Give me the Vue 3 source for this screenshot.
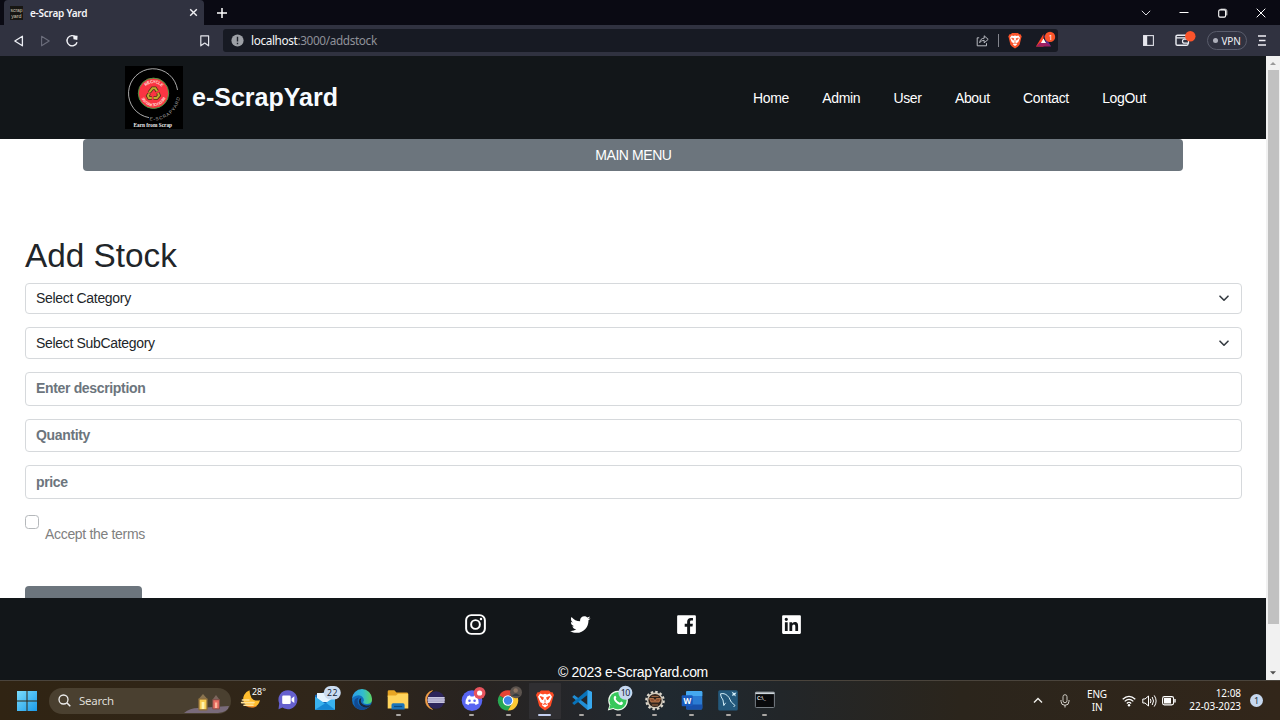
<script setup>
const links = ['Home', 'Admin', 'User', 'About', 'Contact', 'LogOut']
const apps = ['weather', 'chat', 'mail', 'edge', 'folder', 'eclipse', 'discord', 'chrome', 'brave', 'code', 'whatsapp', 'gear', 'word', 'mysql', 'terminal']
const running = ['folder', 'discord', 'chrome', 'brave', 'code', 'whatsapp', 'gear', 'word', 'mysql', 'terminal']
</script>

<template>
  <div class="screen">
    <div class="tabstrip">
      <div class="tab">
        <svg class="favicon" width="13" height="14" viewBox="0 0 13 14">
          <rect width="13" height="14" fill="#171613" />
          <text x="0.5" y="6" font-size="5.8" textLength="12" lengthAdjust="spacingAndGlyphs" fill="#d0c8b6">scrap</text>
          <text x="1.2" y="12" font-size="5.8" textLength="10.4" lengthAdjust="spacingAndGlyphs" fill="#d0c8b6">yard</text>
        </svg>
        <span class="tab-title">e-Scrap Yard</span>
        <svg class="tab-close" width="9" height="9" viewBox="0 0 9 9"><path d="M1.2 1.2 7.8 7.8M7.8 1.2 1.2 7.8" stroke="#f1f1f4" stroke-width="1.4" /></svg>
      </div>
      <svg class="plus" width="10" height="10" viewBox="0 0 10 10"><path d="M5 0V10M0 5H10" stroke="#fff" stroke-width="1.5" /></svg>
      <div class="win-btns">
        <svg width="10" height="10" viewBox="0 0 10 10"><path d="M.8 2.8 5 7 9.2 2.8" fill="none" stroke="#d8d8dc" /></svg>
        <svg width="10" height="10" viewBox="0 0 10 10"><path d="M.5 4.5H9.5" stroke="#fff" /></svg>
        <svg width="10" height="10" viewBox="0 0 10 10"><path d="M2.6 1.2H7.2Q8.8 1.2 8.8 2.8V7.4" fill="none" stroke="#ddd" /><rect x=".7" y="1.9" width="6.9" height="7.2" rx="1.3" fill="#0b0b14" stroke="#fff" stroke-width="1.1" /></svg>
        <svg width="10" height="10" viewBox="0 0 10 10"><path d="M.7.7 9.3 9.3M9.3.7.7 9.3" stroke="#fff" /></svg>
      </div>
    </div>

    <div class="toolbar">
      <div class="nav-btns">
        <svg width="12" height="12" viewBox="0 0 12 12"><path d="M9.4 1.2 1.8 6 9.4 10.8Z" fill="none" stroke="#eceef4" stroke-width="1.3" stroke-linejoin="round" /></svg>
        <svg width="12" height="12" viewBox="0 0 12 12"><path d="M2.6 1.2 10.2 6 2.6 10.8Z" fill="none" stroke="#6b6d7b" stroke-width="1.1" stroke-linejoin="round" /></svg>
        <svg width="14" height="14" viewBox="0 0 14 14"><path d="M10.8 3.2A5.1 5.1 0 1 0 12 8.2" fill="none" stroke="#f2f3f7" stroke-width="1.4" /><path d="M8.2 1.4 12.6 1.7 12.3 5.9 8.5 5.2Z" fill="#f2f3f7" /></svg>
      </div>
      <svg class="bookmark" width="10" height="12" viewBox="0 0 10 12"><path d="M.8.9H8.6V10.8L4.7 8 .8 10.8Z" fill="none" stroke="#e4e5eb" stroke-width="1.2" stroke-linejoin="round" /></svg>
      <div class="address">
        <svg width="13" height="13" viewBox="0 0 13 13"><circle cx="6.5" cy="6.5" r="6.1" fill="#9da0a6" /><path d="M6.5 2.8V7.4M6.5 8.7V10.2" stroke="#20242d" stroke-width="1.4" /></svg>
        <span class="url"><b>localhost</b>:3000/addstock</span>
        <div class="addr-icons">
          <svg width="13" height="13" viewBox="0 0 13 13"><path d="M3.2 3.8H1.2V11.8H10.5V9.2M3.7 8.7C4 5.8 5.6 4.3 8.2 4.2V1.8L12.2 5.4 8.2 8.8V6.4C6.2 6.4 4.8 7 3.7 8.7Z" fill="none" stroke="#c1c3c9" stroke-width=".95" stroke-linejoin="round" /></svg>
          <i></i>
          <svg width="14" height="16" viewBox="0 0 14 16"><path d="M4 0H10L11.2 1.3 12.5 1.3 13.7 3.4 13.2 5 11.6 11.7 10 13.6 7 15.6 4 13.6 2.4 11.7.8 5 .3 3.4 1.5 1.3H2.8Z" fill="#fb542b" /><path d="M3.6 2.4 5.4 3 7 2.6 8.6 3 10.4 2.4 12 4.8 10.2 9.2 8.4 10 9 11.4 7 13 5 11.4 5.6 10 3.8 9.2 2 4.8Z" fill="#fff" /><path d="M3.6 5 6 5.7 5.3 7.2ZM10.4 5 8 5.7 8.7 7.2ZM7 7V9.2M5.5 10.5 7 9.7 8.5 10.5" fill="#fb542b" stroke="#fb542b" stroke-width=".7" /></svg>
          <svg class="bat" width="20" height="17" viewBox="0 0 20 17"><path d="M7.5 3 0 15.6H7.5Z" fill="#ff4724" /><path d="M0 15.6H15L12.5 11.4H4Z" fill="#9e1f63" /><path d="M7.5 3 15 15.6 10 11.4Z" fill="#662d91" /><path d="M7.5 7.4 10.1 12H4.9Z" fill="#fff" /><circle cx="14" cy="5.9" r="5.2" fill="#fb542b" /><text x="12.5" y="8.7" font-size="7.5" fill="#fff">1</text></svg>
        </div>
      </div>
      <div class="ext">
        <svg width="11" height="11" viewBox="0 0 11 11"><rect x=".6" y=".6" width="9.8" height="9.8" fill="none" stroke="#dfe0e6" stroke-width="1.1" /><path d="M.5.5H4.2V10.5H.5Z" fill="#e6e7ed" /></svg>
        <svg class="wallet" width="22" height="18" viewBox="0 0 22 18"><path d="M11 5.3H2.5Q1 5.3 1 6.6V14Q1 15.3 2.4 15.3H11.5Q13 15.3 13 14V13M1.4 7.9H11.5Q13 7.9 13 9" fill="none" stroke="#eceef3" stroke-width="1.4" /><path d="M13.5 9.2H9.5A2 2 0 0 0 9.5 13.2H13.5Z" fill="#303240" stroke="#eceef3" stroke-width="1.2" /><circle cx="15.3" cy="6.2" r="5.2" fill="#fb542b" /></svg>
        <span class="vpn"><i></i>VPN</span>
        <svg width="8" height="11" viewBox="0 0 8 11"><path d="M0 1H8M1 5.5H7.5M0 10H8" stroke="#f0f0f5" stroke-width="1.3" /></svg>
      </div>
    </div>

    <div class="viewport">
      <div class="page">
        <header>
          <svg class="logo" width="58" height="63" viewBox="0 0 58 63">
            <defs>
              <path id="outer" d="M24.5 54.2A26.8 26.8 0 0 0 55 25" />
              <path id="upper" d="M18.2 27.3A10.3 10.3 0 0 1 38.8 27.3" />
              <path id="lower" d="M38.8 27.3A10.3 10.3 0 0 1 18.2 27.3" />
            </defs>
            <rect width="58" height="63" fill="#000" />
            <path d="M24 51.6A24.6 24.6 0 1 1 52.5 24" fill="none" stroke="#d6d6d6" stroke-width=".8" />
            <circle cx="28.5" cy="27.3" r="15.2" fill="#fb3442" stroke="#479a42" stroke-width="1" />
            <text font-size="4.6" fill="#b0b0b0"><textPath href="#outer" textLength="42">E-SCRAPYARD</textPath></text>
            <text font-size="4.2" font-weight="700" fill="#ffe3df"><textPath href="#upper" startOffset="7.5" textLength="18">RECYCLE</textPath></text>
            <text font-size="3.8" font-weight="700" fill="#ffe3df"><textPath href="#lower" startOffset="3.5" textLength="25">REDUCE REUSE</textPath></text>
            <g fill="none" stroke="#493516" stroke-width="3.6"><path d="M24.2 26.5 27.5 22.3H30.2L32.2 25.3" /><path d="M33 26.8 34 29.5 31.8 32H28.5" /><path d="M26.8 32H24L22.8 29.8 24.2 27.6" /></g>
            <g fill="none" stroke="#c3aa2e" stroke-width="2"><path d="M24.2 26.5 27.5 22.3H30.2L32.2 25.3" /><path d="M33 26.8 34 29.5 31.8 32H28.5" /><path d="M26.8 32H24L22.8 29.8 24.2 27.6" /></g>
            <text class="motto" x="8.5" y="60.6" font-size="5.3" font-weight="700" textLength="38.5" lengthAdjust="spacingAndGlyphs" fill="#eee">Earn from Scrap</text>
          </svg>
          <span class="brand">e-ScrapYard</span>
          <nav><a v-for="l in links" :key="l">{{ l }}</a></nav>
        </header>
        <main>
          <div class="menu">MAIN MENU</div>
          <h1>Add Stock</h1>
          <div class="field select">Select Category
            <svg width="10" height="7" viewBox="0 0 10 7"><path d="M1 1.2 5 5.2 9 1.2" fill="none" stroke="#343a40" stroke-width="1.6" stroke-linecap="round" stroke-linejoin="round" /></svg>
          </div>
          <div class="field select">Select SubCategory
            <svg width="10" height="7" viewBox="0 0 10 7"><path d="M1 1.2 5 5.2 9 1.2" fill="none" stroke="#343a40" stroke-width="1.6" stroke-linecap="round" stroke-linejoin="round" /></svg>
          </div>
          <div class="field input">Enter description</div>
          <div class="field input">Quantity</div>
          <div class="field input">price</div>
          <div class="terms"><span class="check"></span><label>Accept the terms</label></div>
          <div class="submit"></div>
        </main>
        <footer>
          <div class="social">
            <svg width="25" height="25" viewBox="0 0 24 24"><rect x="3" y="3" width="18" height="18" rx="5" fill="none" stroke="#fff" stroke-width="1.9" /><circle cx="12" cy="12" r="4.2" fill="none" stroke="#fff" stroke-width="1.9" /><circle cx="17.3" cy="6.7" r="1.2" fill="#fff" /></svg>
            <svg width="25" height="25" viewBox="0 0 24 24"><path fill="#fff" d="M19.633 7.997c.013.175.013.349.013.523 0 5.325-4.053 11.461-11.46 11.461-2.282 0-4.402-.661-6.186-1.809.324.037.636.05.973.05a8.07 8.07 0 0 0 5.001-1.721 4.036 4.036 0 0 1-3.767-2.793c.249.037.499.062.761.062.361 0 .724-.05 1.061-.137a4.027 4.027 0 0 1-3.23-3.953v-.05c.537.299 1.16.486 1.82.511a4.022 4.022 0 0 1-1.796-3.354c0-.748.199-1.434.548-2.032a11.457 11.457 0 0 0 8.306 4.215c-.062-.3-.1-.611-.1-.923a4.026 4.026 0 0 1 4.028-4.028c1.16 0 2.207.486 2.943 1.272a7.957 7.957 0 0 0 2.556-.973 4.02 4.02 0 0 1-1.771 2.22 8.073 8.073 0 0 0 2.319-.624 8.645 8.645 0 0 1-2.019 2.083z" /></svg>
            <svg width="25" height="25" viewBox="0 0 24 24"><path fill="#fff" d="M20 3H4a1 1 0 0 0-1 1v16a1 1 0 0 0 1 1h8.615v-6.96h-2.338v-2.725h2.338v-2c0-2.325 1.42-3.592 3.5-3.592.699-.002 1.399.034 2.095.107v2.42h-1.435c-1.128 0-1.348.538-1.348 1.325v1.735h2.697l-.35 2.725h-2.348V21H20a1 1 0 0 0 1-1V4a1 1 0 0 0-1-1z" /></svg>
            <svg width="25" height="25" viewBox="0 0 24 24"><path fill="#fff" d="M20 3H4a1 1 0 0 0-1 1v16a1 1 0 0 0 1 1h16a1 1 0 0 0 1-1V4a1 1 0 0 0-1-1zM8.339 18.337H5.667v-8.59h2.672v8.59zM7.003 8.574a1.548 1.548 0 1 1 0-3.096 1.548 1.548 0 0 1 0 3.096zm11.335 9.763h-2.669V14.16c0-.996-.018-2.277-1.388-2.277-1.39 0-1.601 1.086-1.601 2.207v4.248h-2.667v-8.59h2.56v1.174h.037c.355-.675 1.227-1.387 2.524-1.387 2.704 0 3.203 1.778 3.203 4.092v4.71z" /></svg>
          </div>
          <p>© 2023 e-ScrapYard.com</p>
        </footer>
      </div>
      <div class="scrollbar">
        <svg width="14" height="14" viewBox="0 0 14 14"><path d="M4 9 7 6 10 9Z" fill="#9a9a9a" /></svg>
        <div class="thumb"></div>
        <svg width="14" height="14" viewBox="0 0 14 14"><path d="M4 5.3H10L7 8.5Z" fill="#505050" /></svg>
      </div>
    </div>

    <div class="taskbar">
      <svg class="start" width="20" height="20" viewBox="0 0 20 20">
        <defs><linearGradient id="win" x2="1" y2="1"><stop stop-color="#7bdcfb" /><stop offset="1" stop-color="#1a9bea" /></linearGradient></defs>
        <path d="M0 0H9.5V9.5H0ZM10.5 0H20V9.5H10.5ZM0 10.5H9.5V20H0ZM10.5 10.5H20V20H10.5Z" fill="url(#win)" />
      </svg>
      <div class="search">
        <svg width="13" height="13" viewBox="0 0 13 13"><circle cx="5.5" cy="5.5" r="4.5" fill="none" stroke="#eee" stroke-width="1.3" /><path d="M8.8 8.8 12.3 12.3" stroke="#eee" stroke-width="1.5" /></svg>
        <span>Search</span>
        <svg class="lamps" width="47" height="26" viewBox="0 0 47 26">
          <path d="M0 25Q6 20 14 20L45 18Q44 24 34 25Z" fill="#796b7b" />
          <path d="M14.6 11 19 6 23.4 11Z" fill="#8a7450" />
          <rect x="14.3" y="10.2" width="9.4" height="12.3" rx="1" fill="#8a6c3d" /><rect x="15.6" y="11.6" width="6.8" height="9.6" fill="#f8cb50" /><rect x="17.6" y="14" width="2.8" height="7" fill="#fff3ae" />
          <path d="M28.6 11.5 32 7 35.4 11.5Z" fill="#7c655c" /><rect x="28.2" y="11" width="7.8" height="10.5" rx="1" fill="#84504a" /><rect x="29.3" y="12.2" width="5.6" height="8.2" fill="#e76d62" /><rect x="31" y="14.5" width="2.2" height="5.5" fill="#ffb59b" />
        </svg>
      </div>
      <div class="apps">
        <div v-for="a in apps" :key="a" class="app" :class="{ active: a === 'brave' }">
          <svg width="32" height="32" viewBox="0 0 32 32">
            <g v-if="a === 'weather'">
              <path d="M13.5 6.2A9.2 9.2 0 0 0 7.6 17.5Q9.5 23 16 23.2 22.2 23 24 16.2 14 18.5 13.5 6.2Z" fill="#ffbd2e" /><path d="M6.4 16H13M5.6 18.6H18M8 21.2H17" stroke="#ffe39b" stroke-width="1.6" stroke-linecap="round" /><path d="M9.5 22.2H21Q16 25 9.5 22.2Z" fill="#ef8228" />
              <text x="16" y="10.8" font-size="8.8" textLength="14" fill="#fff">28°</text>
            </g>
            <g v-else-if="a === 'chat'"><path d="M16 6.2A9.5 9.5 0 1 1 10.5 23.5L6.5 25.2 7.2 19.5A9.5 9.5 0 0 1 16 6.2Z" fill="#6560ce" /><rect x="10.2" y="11.6" width="8.5" height="8.4" rx="1.2" fill="#fff" /><path d="M19.5 14.5 22.3 12.2V19L19.5 17Z" fill="#fff" /></g>
            <g v-else-if="a === 'mail'"><path d="M6 11 16 8 26 12V25.5H6Z" fill="#1566b6" /><path d="M8 9H24V18H8Z" fill="#e5f4ff" /><path d="M6 12.5 16 19.5 26 12.5V25.8H6Z" fill="#39b2ef" /><path d="M6 25.8 17 18.8 26 25.8Z" fill="#1687d3" /><rect x="14.8" y="2" width="17" height="13.4" rx="6.7" fill="#cadcf1" /><text x="18" y="11.9" font-size="8.7" textLength="10.5" fill="#152638">22</text></g>
            <g v-else-if="a === 'edge'">
              <defs><linearGradient id="ed" x2="1" y2="0"><stop stop-color="#2c9de9" /><stop offset=".55" stop-color="#32bdce" /><stop offset="1" stop-color="#60d65e" /></linearGradient></defs>
              <circle cx="16" cy="16" r="10" fill="#126ec0" /><path d="M6 15A10 10 0 0 1 26 15Q26.4 19.5 21.5 20 17 20.3 17.2 18.1 18.6 16.8 17.5 14.6 14.8 10.2 10 11.8 7 12.8 6 15Z" fill="url(#ed)" /><path d="M13 13.5Q10.6 16 12.3 20 14.9 24.5 23 22.5 19 27 13.2 25.5 7.4 23.7 8.3 17.2 9 14 13 13.5Z" fill="#124a91" /><path d="M15.2 14.1Q13.2 20.3 20 21.4 23.2 21.9 25.2 20.3 23.6 23.4 20.6 23.5 13.4 23.5 12.9 17.6Q12.9 14.6 15.2 14.1Z" fill="#1b263c" />
            </g>
            <g v-else-if="a === 'folder'"><path d="M5.7 7.5Q5.7 6.3 7 6.3H12.3L14.5 8.4H24.8Q26 8.4 26 9.6V13H5.7Z" fill="#e8a523" /><path d="M5.7 11.5H14L16 9.7H26.3V24.5H5.7Z" fill="#ffd45c" /><path d="M9.5 25.5V21Q9.5 19.3 11.2 19.3H21Q22.6 19.3 22.6 21V25.5Z" fill="#1a75ba" /><path d="M12 22.5H20.2" stroke="#0c4b7e" stroke-width="1.2" /></g>
            <g v-else-if="a === 'eclipse'"><path d="M13.5 6.6A9.8 9.8 0 0 0 13.5 25.4 11 11 0 0 1 13.5 6.6Z" fill="#f5a149" stroke="#f5a149" stroke-width=".6" /><circle cx="17" cy="16" r="8.7" fill="#2d255b" /><path d="M9 13.2H25.5V18.8H9Z" fill="#a7a3c6" /><path d="M9 13.7H25.5M8.2 16H26M9 18.3H25.5" stroke="#c9c7df" stroke-width="1.2" /></g>
            <g v-else-if="a === 'discord'"><circle cx="16" cy="16.6" r="10.3" fill="#5865f2" /><path d="M11.5 12.2 14 11.3 14.6 12.4H17.5L18.2 11.3 20.8 12.2Q23 16 22.7 19.6L19.7 21 18.6 19.4H13.5L12.4 21 9.4 19.6Q9.2 15.6 11.5 12.2Z" fill="#fff" /><circle cx="13.5" cy="16.7" r="1.3" fill="#5865f2" /><circle cx="18.6" cy="16.7" r="1.3" fill="#5865f2" /><circle cx="23.6" cy="9" r="5.9" fill="#e8545d" /><circle cx="23.6" cy="9" r="2.6" fill="#fff" /></g>
            <g v-else-if="a === 'chrome'"><path d="M16 16.5 7.3 11.4A10 10 0 0 1 24.8 11.5H16Z" fill="#e64434" /><path d="M7.3 11.4A10 10 0 0 0 15.8 26.5L20.3 19Z" fill="#28a852" /><path d="M24.8 11.5A10 10 0 0 1 15.8 26.5L20.5 18.8 20 11.5Z" fill="#fcc934" /><circle cx="16" cy="16.5" r="5.3" fill="#fff" /><circle cx="16" cy="16.5" r="4.2" fill="#4285e8" /><circle cx="24" cy="8.3" r="6" fill="#5c544f" /><circle cx="23.7" cy="6.5" r="2.2" fill="#8a7464" /><path d="M20 12Q24 7 28 12" fill="#343c42" /></g>
            <g v-else-if="a === 'brave'"><path d="M12 6.4H20L21.7 8.2H23.5L25 11 24.2 13 21.8 22 19.8 24 16 26.5 12.2 24 10.2 22 7.8 13 7 11 8.5 8.2H10.3Z" fill="#ff4b25" /><path d="M11.2 9.6 14 10.4 16 9.8 18 10.4 20.8 9.6 23 12.8 20.6 18.2 18.3 19.4 19 21.3 16 23.6 13 21.3 13.7 19.4 11.4 18.2 9 12.8Z" fill="#fff" /><path d="M11.2 12.5 14.4 13.6 13.5 16ZM20.8 12.5 17.6 13.6 18.5 16ZM16 15.5V18.6M14 20.6 16 19.3 18 20.6" fill="#ff4b25" stroke="#ff4b25" stroke-width=".9" /></g>
            <g v-else-if="a === 'code'"><path d="M21.5 6 26 8V24L21.5 26 6.2 12.9 8.2 11 21.5 21Z" fill="#218ed5" /><path d="M21.5 6V11L8.2 21 6.2 19.1Z" fill="#0873ba" /><path d="M21.5 6 26 8V24L21.5 26Z" fill="#38a9ef" /></g>
            <g v-else-if="a === 'whatsapp'"><path d="M16 6.8A9.8 9.8 0 1 1 11.2 25.1L5.8 26.6 7.4 21.3A9.8 9.8 0 0 1 16 6.8Z" fill="#eefbed" /><circle cx="16" cy="16.6" r="8.6" fill="#37c85b" /><path d="M8 20.5 7.4 24.9 12 23.8Z" fill="#37c85b" /><path d="M12.3 12.2Q13.6 11 14.3 13.3L13.7 15Q15 17.8 17.8 18.8L19.2 17.5Q21.8 18.3 20.5 20.2 18.3 22.4 14.5 19.1 10.3 15.2 12.3 12.2Z" fill="#fff" /><circle cx="23.4" cy="8.8" r="7" fill="#c5d7f0" /><text x="18.8" y="12" font-size="8.8" textLength="9.5" fill="#182334">10</text></g>
            <g v-else-if="a === 'gear'"><circle cx="16" cy="16.5" r="8.7" fill="none" stroke="#ddd8ce" stroke-width="2.2" stroke-dasharray="2.5 2.05" /><circle cx="16" cy="16.5" r="7.3" fill="#30231c" stroke="#d4cbbc" stroke-width="1.4" /><path d="M10.5 14.5H14.5L16 17 17.5 14.5H21.5L20 18H12ZM12.5 12.4H19.5M13 21H19" fill="#8d5132" stroke="#c38050" stroke-width=".8" /></g>
            <g v-else-if="a === 'word'"><rect x="10" y="7" width="16.3" height="18.5" rx="1.5" fill="#2b7cd3" /><path d="M10 8Q10 7 11.5 7H25Q26.3 7 26.3 8V12H10Z" fill="#45a9ef" /><path d="M10 20.5H26.3V24Q26.3 25.5 25 25.5H11.5Q10 25.5 10 24Z" fill="#1851ab" /><rect x="5.7" y="11.3" width="11" height="11" rx="1" fill="#185abd" /><text x="7.5" y="19.7" font-size="8" font-weight="700" fill="#fff">W</text></g>
            <g v-else-if="a === 'mysql'"><rect x="6.2" y="6.2" width="19.6" height="20.3" rx="1.5" fill="#24597c" /><path d="M8.5 9.8Q13.5 8.5 17 13.5 18.5 18.5 23 21.5L21.5 23M8.5 9.8Q8.6 13 11 16L11.8 21.5 13.6 18.8" fill="none" stroke="#d2edf7" stroke-width="1" /><path d="M19.5 7.5 22 9 24.5 8.5 23.2 10.4 24 12.5 22 11.3 20 12 20.8 9.8Z" fill="#d2edf7" /></g>
            <g v-else><rect x="6.4" y="8" width="19" height="15.5" rx=".8" fill="#090a0c" stroke="#777e84" /><path d="M6.4 9.2H25.4" stroke="#ced6dc" stroke-width="1.8" /><text x="8" y="15.6" font-size="5" font-weight="700" fill="#ddd">C:\_</text></g>
          </svg>
          <i v-if="running.includes(a)"></i>
        </div>
      </div>
      <div class="tray">
        <svg class="up" width="10" height="7" viewBox="0 0 10 7"><path d="M1 5.6 5 1.6 9 5.6" fill="none" stroke="#f2f0ec" stroke-width="1.4" /></svg>
        <svg class="mic" width="10" height="14" viewBox="0 0 10 14"><rect x="3" y=".7" width="4" height="8" rx="2" fill="none" stroke="#cac7c0" /><path d="M1 6V7.3A4 4 0 0 0 9 7.3V6M5 11.3V13.5" fill="none" stroke="#dedbd5" /></svg>
        <div class="lang"><span>ENG</span><span>IN</span></div>
        <svg class="wifi" width="14" height="12" viewBox="0 0 14 12"><path d="M.7 4.3Q7-1.7 13.3 4.3M2.7 6.4Q7 2.2 11.3 6.4M4.8 8.5Q7 6.3 9.2 8.5" fill="none" stroke="#fff" stroke-width="1.2" /><circle cx="7" cy="10.3" r="1.2" fill="#fff" /></svg>
        <svg class="vol" width="15" height="14" viewBox="0 0 15 14"><path d="M.8 5H3L6.5 2V12L3 9H.8Z" fill="none" stroke="#fff" stroke-linejoin="round" /><path d="M8.2 4.8Q9.8 7 8.2 9.2M10.2 3Q12.8 7 10.2 11M12.2 1.4Q16 7 12.2 12.6" fill="none" stroke="#fff" /></svg>
        <svg class="batt" width="14" height="10" viewBox="0 0 14 10"><rect x=".6" y=".6" width="11" height="8.3" rx="1.8" fill="none" stroke="#fff" stroke-width="1.1" /><rect x="2" y="2" width="7" height="5.5" fill="#fff" /><path d="M13 3V6.5" stroke="#fff" stroke-width="1.4" /></svg>
        <div class="clock"><span>12:08</span><span>22-03-2023</span></div>
        <span class="note">1</span>
      </div>
    </div>
  </div>
</template>

<style>
body { margin: 0; overflow: hidden; }
</style>

<style scoped>
* { box-sizing: border-box; }
.screen { width: 1280px; height: 720px; display: flex; flex-direction: column; overflow: hidden; font-family: "Noto Sans", "Open Sans", sans-serif; background: #fff; }
svg { display: block; flex: none; }
.tabstrip { height: 25px; background: #0a0a13; display: flex; align-items: center; flex: none; }
.tab { width: 200px; height: 25px; margin-left: 4px; background: #303240; border-radius: 4px 4px 0 0; display: flex; align-items: center; padding: 0 6px; }
.favicon { font-family: "Liberation Sans", sans-serif; overflow: visible; }
.tab-title { font-size: 10px; font-weight: 600; color: #f4f4f7; margin-left: 7px; letter-spacing: -.25px; }
.tab-close { margin-left: auto; }
.plus { margin-left: 13px; }
.win-btns { margin-left: auto; margin-right: 14px; display: flex; gap: 28.3px; }
.toolbar { height: 31px; background: #303240; display: flex; align-items: center; flex: none; }
.nav-btns { display: flex; align-items: center; gap: 14px; margin-left: 13px; }
.bookmark { margin-left: 121px; }
.address { width: 835px; height: 23px; margin-left: 13px; border-radius: 3px; background: #171a23; display: flex; align-items: center; padding-left: 8px; }
.url { font-size: 11.8px; color: #8f9199; margin-left: 7px; margin-top: -1px; letter-spacing: -.38px; white-space: nowrap; }
.url b { font-weight: 400; color: #f4f5f7; }
.addr-icons { margin-left: auto; display: flex; align-items: center; }
.addr-icons i { width: 1px; height: 13px; background: #83858d; margin: 0 9px 0 9px; }
.bat { margin: 0 2px 2px 14px; }
.ext { display: flex; align-items: center; margin-left: 85px; }
.wallet { margin: -4px 0 0 21px; }
.vpn { width: 40px; height: 19px; border: 1px solid #595c6b; border-radius: 10px; margin: 0 11px 0 10px; color: #f0f1f5; font-size: 10px; letter-spacing: -.15px; display: flex; align-items: center; justify-content: center; gap: 3px; }
.vpn i { width: 5px; height: 5px; border-radius: 50%; background: #aeb0bb; }
.viewport { height: 624px; display: flex; flex: none; font-family: "Liberation Sans", Arial, sans-serif; font-size: 14px; letter-spacing: -.32px; }
.page { width: 1266px; display: flex; flex-direction: column; }
header { height: 83px; background: #121619; display: flex; align-items: center; flex: none; padding-left: 125px; color: #fff; }
.logo { letter-spacing: 0; }
.brand { font-size: 25px; font-weight: 700; color: #f7fbff; margin-left: 9px; letter-spacing: 0; }
nav { display: flex; gap: 33.3px; margin: 0 120px 0 auto; letter-spacing: -.35px; }
.motto { font-family: "Liberation Serif", serif; }
main { flex: 1; padding: 0 24px 0 25px; overflow: hidden; min-height: 0; color: #212529; }
.menu { width: 1100px; height: 32px; margin: 0 0 0 58.4px; background: #6c757d; color: #fff; border-radius: 4px; display: flex; align-items: center; justify-content: center; letter-spacing: -.42px; }
h1 { font-size: 33.333px; line-height: 40px; font-weight: 400; margin: 65px 0 6.6px; letter-spacing: 0; }
.field { border: 1px solid #d6d9dc; border-radius: 4px; display: flex; align-items: center; padding: 0 10px; margin-bottom: 13.2px; }
.select { height: 31.6px; justify-content: space-between; padding: 0 12px 1px 10px; }
.select svg { margin-top: 2px; }
.input { height: 33.4px; font-weight: 700; color: #6c757d; padding-bottom: 1px; letter-spacing: -.34px; }
.terms { display: flex; align-items: flex-start; margin-top: 16px; height: 71.2px; }
.check { width: 14px; height: 14px; border: 1px solid #b5b8bb; border-radius: 3.5px; }
.terms label { color: #808080; margin: 12px 0 0 6px; line-height: 15px; }
.submit { width: 117px; height: 32px; background: #6c757d; border-radius: 4px; }
footer { height: 82.5px; background: #121619; color: #fff; flex: none; padding-top: 14.5px; }
.social { display: flex; justify-content: center; gap: 80.3px; padding-left: 1px; }
footer p { margin: 28px 0 0; line-height: 15px; text-align: center; letter-spacing: -.33px; }
.scrollbar { width: 14px; background: #f1f1f1; display: flex; flex-direction: column; }
.thumb { width: 11px; height: 554px; background: #c1c1c1; margin: 0 auto auto 2px; flex: none; }
.taskbar { height: 40px; flex: none; border-top: 1px solid #4a443c; background: linear-gradient(90deg, #302413 0%, #30261a 25%, #282320 37%, #24262a 45%, #202930 52%, #222629 61%, #2b251c 75%, #32261a 100%); display: flex; align-items: center; }
.start { margin-left: 17px; }
.search { width: 182px; height: 26px; margin-left: 12px; border-radius: 13px; background: #4a4030; display: flex; align-items: center; padding-left: 9px; overflow: hidden; }
.search span { color: #dedbd5; font-size: 11.5px; margin-left: 8px; letter-spacing: -.25px; }
.lamps { margin-left: auto; }
.apps { display: flex; margin-left: 2.5px; }
.app { width: 36.65px; height: 36px; display: flex; justify-content: center; align-items: center; position: relative; }
.app svg { margin-top: -1px; }
.app i { position: absolute; bottom: 3px; width: 5px; height: 2px; border-radius: 1px; background: #aaa7a4; }
.app.active { background: linear-gradient(90deg, transparent 6%, #302f32 6%, #302f32 94%, transparent 94%); border-radius: 4px; }
.app.active i { width: 13px; background: #c3cff0; }
.tray { margin-left: auto; display: flex; align-items: center; color: #fff; font-size: 10px; }
.mic { margin-left: 17px; }
.lang { width: 24px; margin-left: 15px; display: flex; flex-direction: column; align-items: center; line-height: 13px; letter-spacing: -.2px; }
.wifi { margin-left: 13px; }
.vol { margin-left: 6px; }
.batt { margin-left: 5px; }
.clock { display: flex; flex-direction: column; align-items: flex-end; line-height: 13px; width: 60px; margin: -1px 0 0 5px; letter-spacing: -.05px; white-space: nowrap; }
.note { width: 13px; height: 13px; border-radius: 50%; background: #c7d8ef; color: #234; font-size: 9px; line-height: 13px; text-align: center; margin: 0 17px 0 9px; }
</style>
